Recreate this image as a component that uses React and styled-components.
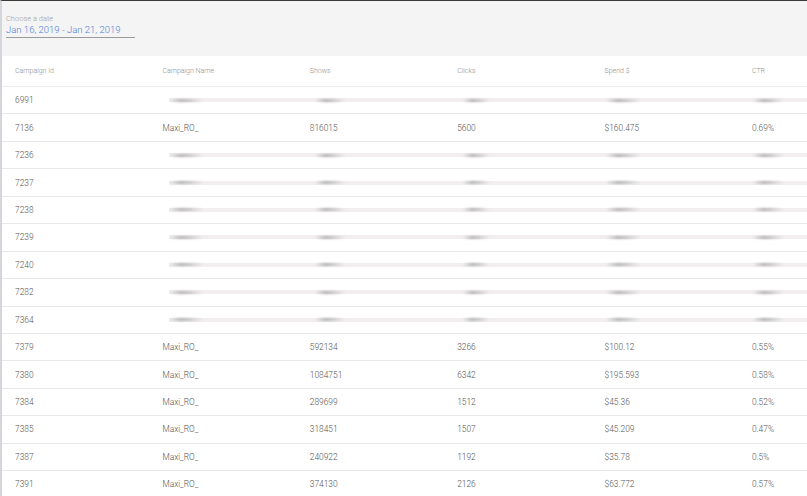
import React from "react";
import styled, { createGlobalStyle } from "styled-components";

const rows = [
  { id: "6991", hidden: true },
  { id: "7136", name: "Maxi_RO_", shows: "816015", clicks: "5600", spend: "$160.475", ctr: "0.69%" },
  { id: "7236", hidden: true },
  { id: "7237", hidden: true },
  { id: "7238", hidden: true },
  { id: "7239", hidden: true },
  { id: "7240", hidden: true },
  { id: "7282", hidden: true },
  { id: "7364", hidden: true },
  { id: "7379", name: "Maxi_RO_", shows: "592134", clicks: "3266", spend: "$100.12", ctr: "0.55%" },
  { id: "7380", name: "Maxi_RO_", shows: "1084751", clicks: "6342", spend: "$195.593", ctr: "0.58%" },
  { id: "7384", name: "Maxi_RO_", shows: "289699", clicks: "1512", spend: "$45.36", ctr: "0.52%" },
  { id: "7385", name: "Maxi_RO_", shows: "318451", clicks: "1507", spend: "$45.209", ctr: "0.47%" },
  { id: "7387", name: "Maxi_RO_", shows: "240922", clicks: "1192", spend: "$35.78", ctr: "0.5%" },
  { id: "7391", name: "Maxi_RO_", shows: "374130", clicks: "2126", spend: "$63.772", ctr: "0.57%" },
];

const columns = ["Campaign Id", "Campaign Name", "Shows", "Clicks", "Spend $", "CTR"];

const GlobalStyle = createGlobalStyle`
  body {
    margin: 0;
    background: #ffffff;
    font-family: Roboto, "Liberation Sans", sans-serif;
    overflow: hidden;
  }
`;

const Page = styled.div`
  width: 807px;
  height: 496px;
  box-sizing: border-box;
  border-top: 1px solid #3a3a3a;
  border-left: 2px solid #d3d6da;
  overflow: hidden;
`;

const Filters = styled.div`
  background: #f4f4f4;
  height: 55px;
  padding: 5px 0 0 4px;
  box-sizing: border-box;
`;

const DateField = styled.div`
  display: inline-flex;
  flex-direction: column;
  width: 129px;
  border-bottom: 1px solid #9a9a9a;
  padding-bottom: 1px;
`;

const DateLabel = styled.span`
  font-size: 7.5px;
  font-weight: 300;
  color: #9e9e9e;
  line-height: 10px;
`;

const DateValue = styled.span`
  font-size: 9.5px;
  font-weight: 300;
  color: #4f80d4;
  line-height: 12px;
  white-space: nowrap;
`;

const Grid = styled.div`
  display: grid;
  grid-template-columns: repeat(6, 147.4px);
`;

const HeadRow = styled(Grid)`
  height: 31px;
  border-bottom: 1px solid #ebebeb;
  box-sizing: border-box;
`;

const Row = styled(Grid)`
  height: 27.45px;
  border-bottom: 1px solid #e8e8e8;
  box-sizing: border-box;
`;

const HeadCell = styled.div`
  display: flex;
  align-items: center;
  padding-left: 13px;
  font-size: 7px;
  font-weight: 300;
  color: #8f8f8f;
  white-space: nowrap;
`;

const Cell = styled.div`
  display: flex;
  align-items: center;
  padding-left: 13px;
  font-size: 8.4px;
  font-weight: 300;
  color: #555555;
  white-space: nowrap;
`;

const BlurCell = styled.div`
  display: flex;
  align-items: center;
  padding-left: ${(p) => (p.$first ? "20px" : "0")};
  padding-right: ${(p) => (p.$last ? "10px" : "0")};
`;

const Bar = styled.div`
  flex: 1;
  height: 4px;
  background: #f2eef0;
  display: flex;
  align-items: center;
  filter: blur(0.6px);
`;

const Smudge = styled.div`
  margin-left: ${(p) => p.$offset}px;
  width: ${(p) => p.$w}px;
  height: 3px;
  background: linear-gradient(90deg, rgba(160,160,160,0) 0%, #b4b4b4 35%, #c6c6c6 60%, rgba(190,190,190,0) 100%);
  filter: blur(0.8px);
`;

const smudges = [
  { offset: 0, w: 34 },
  { offset: 18, w: 30 },
  { offset: 19, w: 26 },
  { offset: 14, w: 34 },
  { offset: 14, w: 30 },
];

export default function App() {
  return (
    <Page>
      <GlobalStyle />
      <Filters>
        <DateField>
          <DateLabel>Choose a date</DateLabel>
          <DateValue>Jan 16, 2019 - Jan 21, 2019</DateValue>
        </DateField>
      </Filters>
      <HeadRow>
        {columns.map((c) => (
          <HeadCell key={c}>{c}</HeadCell>
        ))}
      </HeadRow>
      {rows.map((r) => (
        <Row key={r.id}>
          <Cell>{r.id}</Cell>
          {r.hidden ? (
            smudges.map((s, i) => (
              <BlurCell key={i} $first={i === 0} $last={i === smudges.length - 1}>
                <Bar>
                  <Smudge $offset={s.offset} $w={s.w} />
                </Bar>
              </BlurCell>
            ))
          ) : (
            <>
              <Cell>{r.name}</Cell>
              <Cell>{r.shows}</Cell>
              <Cell>{r.clicks}</Cell>
              <Cell>{r.spend}</Cell>
              <Cell>{r.ctr}</Cell>
            </>
          )}
        </Row>
      ))}
    </Page>
  );
}
